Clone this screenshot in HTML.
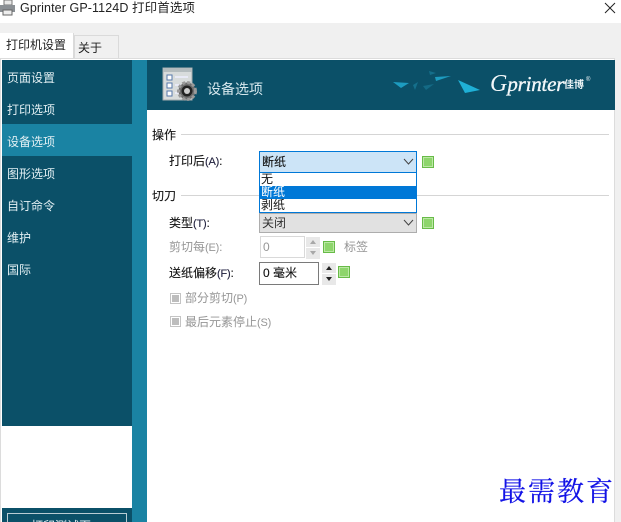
<!DOCTYPE html>
<html><head><meta charset="utf-8"><style>
*{box-sizing:border-box}
html,body{margin:0;padding:0}
body{width:621px;height:522px;position:relative;overflow:hidden;background:#fff;font-family:"Liberation Sans","Noto Sans CJK SC",sans-serif;font-size:12px;color:#222}
#w{position:absolute;left:0;top:0;width:621px;height:522px;overflow:hidden;filter:blur(.3px)}
.a{position:absolute;white-space:nowrap}
.side{left:7px;color:#e2eff3;font-size:12px;line-height:16px}
.lbl{font-size:12px;line-height:16px;color:#111;-webkit-text-stroke:.1px #111}
.lbl b{font-weight:normal;font-size:11px;letter-spacing:-.2px;color:#224}
.dis,.dis b{color:#969696;-webkit-text-stroke:0}
.g{position:absolute;width:12px;height:12px;background:#8ed56c;border:1px solid #68bb48;box-shadow:inset 0 0 0 1px #bce8a6}
.spin{position:absolute;width:14px;height:22px;background:linear-gradient(#e8e8e8 0,#e8e8e8 10px,#fff 10px,#fff 11px,#e8e8e8 11px)}
.spin i{position:absolute;left:4px;width:0;height:0;border-left:3px solid transparent;border-right:3px solid transparent}
.cb{position:absolute;left:170px;width:11px;height:11px;border:1px solid #c4c4c4;background:#fff}
.cb i{position:absolute;left:1px;top:1px;width:7px;height:7px;background:#bdbdbd}
</style></head><body><div id="w">
<div class="a" style="left:0;top:23px;width:621px;height:499px;background:#f0f0f0"></div>
<svg class="a" style="left:0;top:0" width="16" height="16" viewBox="0 0 16 16"><rect x="4" y="0" width="8" height="5" fill="#e8e8e8" stroke="#777"/><rect x="0" y="5" width="15" height="7" fill="#8a8f94"/><rect x="3" y="10" width="9" height="5" fill="#eee" stroke="#666"/></svg>
<div class="a" style="left:20px;top:0;font-size:12.5px;line-height:17px;color:#222;letter-spacing:.1px">Gprinter GP-1124D 打印首选项</div>
<svg class="a" style="left:604px;top:2px" width="12" height="12" viewBox="0 0 12 12"><path d="M1 1L11 11M11 1L1 11" stroke="#222" stroke-width="1"/></svg>

<div class="a" style="left:74px;top:35px;width:45px;height:24px;background:#f0f0f0;border:1px solid #dadada;border-bottom:0"></div>
<div class="a" style="left:78px;top:40px;font-size:12px;line-height:16px">关于</div>
<div class="a" style="left:0;top:33px;width:74px;height:27px;background:#fff;border-right:1px solid #dadada"></div>
<div class="a" style="left:6px;top:37px;font-size:12px;line-height:16px">打印机设置</div>

<div class="a" style="left:0;top:58px;width:615px;height:464px;background:#fff;border:1px solid #dcdcdc;border-bottom:0"></div>
<div class="a" style="left:2px;top:60px;width:145px;height:462px;background:#1a83a3"></div>
<div class="a" style="left:2px;top:60px;width:130px;height:64px;background:#0b5068"></div>
<div class="a" style="left:2px;top:156px;width:130px;height:270px;background:#0b5068"></div>
<div class="a" style="left:2px;top:426px;width:130px;height:82px;background:#fff"></div>
<div class="a" style="left:2px;top:508px;width:130px;height:14px;background:#0b5068"></div>
<div class="a" style="left:7px;top:513px;width:120px;height:12px;border:1px solid #b9ccd3"></div>
<div class="a side" style="left:31px;top:518px">打印测试页</div>
<div class="a side" style="top:70px">页面设置</div>
<div class="a side" style="top:102px">打印选项</div>
<div class="a side" style="top:134px">设备选项</div>
<div class="a side" style="top:166px">图形选项</div>
<div class="a side" style="top:198px">自订命令</div>
<div class="a side" style="top:230px">维护</div>
<div class="a side" style="top:262px">国际</div>

<div class="a" style="left:147px;top:60px;width:468px;height:50px;background:#0b5068"></div>
<svg class="a" style="left:160px;top:66px" width="40" height="38" viewBox="0 0 40 38">
<rect x="3" y="2" width="29" height="32" fill="#d8dcdc" stroke="#a4acae"/>
<rect x="3" y="2" width="29" height="4" fill="#b4bcbe"/>
<rect x="7" y="9" width="5" height="5" fill="#fff" stroke="#5577aa"/><rect x="7" y="17" width="5" height="5" fill="#fff" stroke="#5577aa"/><rect x="7" y="25" width="5" height="5" fill="#fff" stroke="#5577aa"/>
<path d="M15 11H28M15 19H21M15 27H19" stroke="#eef" stroke-width="1.5"/>
<circle cx="27" cy="25" r="8.5" fill="#6e6e6e" stroke="#9a9a9a" stroke-width="3" stroke-dasharray="3 2"/>
<circle cx="27" cy="25" r="5.5" fill="#222"/><circle cx="27" cy="25" r="3" fill="#ccc"/>
</svg>
<div class="a" style="left:207px;top:80px;font-size:14px;line-height:18px;color:#d6e7ed">设备选项</div>
<svg class="a" style="left:380px;top:60px" width="120" height="50" viewBox="0 0 120 50">
<path d="M13 22L29 23L21 28Z" fill="#1d9cc0"/><path d="M55 17L71 16L56 21Z" fill="#1d9cc0"/><path d="M78 20L100 30L85 33Z" fill="#1fb0d6"/>
<path d="M33 25L38 22L35 30Z" fill="#15708c"/><path d="M49 11L56 13L50 15Z" fill="#156f8b"/><path d="M43 26L54 24L46 30Z" fill="#146a85"/>
</svg>
<div class="a" style="left:490px;top:71px;font-family:'Liberation Serif',serif;font-style:italic;font-size:21px;line-height:26px;color:#f2f7f9;-webkit-text-stroke:.35px #f2f7f9"><span style="font-size:24px;-webkit-text-stroke:0">G</span><span style="letter-spacing:-.2px">printer</span></div>
<div class="a" style="left:564px;top:80px;font-size:10px;line-height:12px;font-weight:bold;color:#eef5f7">佳博</div>
<div class="a" style="left:586px;top:76px;font-size:6px;line-height:8px;color:#eef5f7">®</div>

<div class="a lbl" style="left:152px;top:127px">操作</div>
<div class="a" style="left:181px;top:134px;width:428px;height:1px;background:#d5d5d5"></div>
<div class="a lbl" style="left:169px;top:153px">打印后<b>(A)</b>:</div>
<div class="a" style="left:259px;top:151px;width:158px;height:22px;background:#cce4f7;border:1px solid #0078d7"></div>
<div class="a" style="left:262px;top:154px;font-size:12px;line-height:16px;-webkit-text-stroke:.1px #111;color:#111">断纸</div>
<svg class="a" style="left:403px;top:158px" width="11" height="8" viewBox="0 0 11 8"><path d="M1 1L5.5 6L10 1" fill="none" stroke="#444"/></svg>
<div class="g" style="left:422px;top:156px"></div>

<div class="a lbl" style="left:152px;top:188px">切刀</div>
<div class="a" style="left:181px;top:195px;width:428px;height:1px;background:#d5d5d5"></div>

<div class="a lbl" style="left:169px;top:215px">类型<b>(T)</b>:</div>
<div class="a" style="left:259px;top:213px;width:158px;height:20px;background:#e1e1e1;border:1px solid #adadad"></div>
<div class="a" style="left:262px;top:215px;font-size:12px;line-height:16px;color:#333">关闭</div>
<svg class="a" style="left:403px;top:219px" width="11" height="8" viewBox="0 0 11 8"><path d="M1 1L5.5 6L10 1" fill="none" stroke="#444"/></svg>
<div class="g" style="left:422px;top:217px"></div>

<div class="a" style="left:259px;top:172px;width:158px;height:41px;background:#fff;border:1px solid #0078d7"></div>
<div class="a" style="left:260px;top:186px;width:156px;height:13px;background:#0078d7"></div>
<div class="a" style="left:261px;top:173px;font-size:12px;line-height:13px;color:#111">无</div>
<div class="a" style="left:261px;top:186px;font-size:12px;line-height:13px;color:#fff">断纸</div>
<div class="a" style="left:261px;top:199px;font-size:12px;line-height:13px;color:#111">剥纸</div>

<div class="a lbl dis" style="left:169px;top:239px">剪切每<b>(E)</b>:</div>
<div class="a" style="left:260px;top:236px;width:45px;height:22px;background:#fff;border:1px solid #d9d9d9"></div>
<div class="a dis" style="left:263px;top:239px;line-height:16px">0</div>
<div class="spin" style="left:306px;top:237px"><i style="top:3px;border-bottom:4px solid #a8a8a8"></i><i style="top:14px;border-top:4px solid #a8a8a8"></i></div>
<div class="g" style="left:323px;top:241px"></div>
<div class="a dis" style="left:344px;top:239px;line-height:16px">标签</div>

<div class="a lbl" style="left:169px;top:265px">送纸偏移<b>(F)</b>:</div>
<div class="a" style="left:259px;top:262px;width:60px;height:23px;background:#fff;border:1px solid #7a7a7a"></div>
<div class="a" style="left:263px;top:265px;line-height:16px;color:#111;-webkit-text-stroke:.1px #111">0 毫米</div>
<div class="spin" style="left:322px;top:263px"><i style="top:3px;border-bottom:4px solid #222"></i><i style="top:14px;border-top:4px solid #222"></i></div>
<div class="g" style="left:338px;top:266px"></div>

<div class="cb" style="top:293px"><i></i></div>
<div class="a lbl dis" style="left:185px;top:290px">部分剪切<b>(P)</b></div>
<div class="cb" style="top:316px"><i></i></div>
<div class="a lbl dis" style="left:185px;top:314px">最后元素停止<b>(S)</b></div>

<div class="a" style="left:499px;top:473px;font-family:'Noto Serif CJK SC',serif;font-size:27px;line-height:34px;letter-spacing:2px;color:#1212e6;-webkit-text-stroke:.2px #1212e6">最需教育</div>
</div></body></html>
